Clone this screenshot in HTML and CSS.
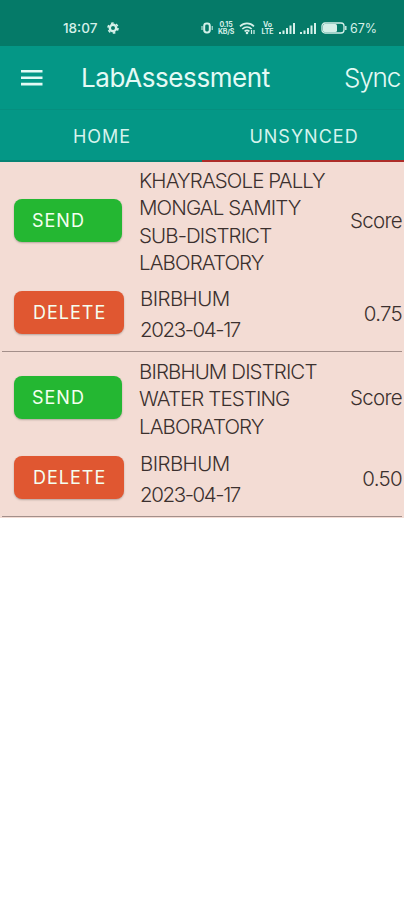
FILE: index.html
```html
<!DOCTYPE html>
<html lang="en">
  <head>
    <meta charset="UTF-8" />
    <meta name="viewport" content="width=device-width, initial-scale=1.0" />
    <title>LabAssessment</title>
    <link rel="stylesheet" href="styles.css">
  </head>
  <body>
    <div class="status-bar">
      <span class="clock">18:07</span>
      <svg class="gear" width="12" height="12" viewBox="0 0 12 12">
        <circle cx="6" cy="6" r="3.2" fill="none" stroke="currentColor" stroke-width="2.4" />
        <circle cx="6" cy="6" r="5" fill="none" stroke="currentColor" stroke-width="1.6" stroke-dasharray="2.6 2.636" />
      </svg>
      <div class="status-icons">
        <svg width="12" height="12" viewBox="0 0 12 12" fill="none" stroke="currentColor">
          <rect x="3.2" y="1.5" width="5.6" height="9" rx="2.4" stroke-width="2" />
          <path d="M1 4v4M11.2 4v4" stroke-width="1" />
        </svg>
        <div class="net-speed"><span>0.15</span><span>KB/S</span></div>
        <svg class="wifi" width="17" height="13" viewBox="0 0 17 13" fill="none" stroke="currentColor">
          <path d="M1 4.4C5 .4 11 .4 15 4.4M3.3 7c2.8-2.6 6.6-2.6 9.4 0M5.6 9.4c1.5-1.3 3.3-1.3 4.8 0" stroke-width="1.6" />
          <circle cx="8" cy="11" r="1.3" fill="currentColor" stroke="none" />
          <path d="M12.5 8v4M15 8v4" stroke-width="1.2" />
        </svg>
        <div class="volte"><span>Vo</span><span>LTE</span></div>
        <svg class="signal" width="18" height="13" viewBox="0 0 18 13" fill="currentColor">
          <path d="M1 10h2v2H1zM4.500 8.500h2V12h-2zM8 6h2v6H8zM11.500 3.500h2V12h-2zM15 1h2v11h-2z" />
        </svg>
        <svg class="signal" width="18" height="13" viewBox="0 0 18 13" fill="currentColor">
          <path d="M1 10h2v2H1zM4.500 8.500h2V12h-2zM8 6h2v6H8zM11.500 3.500h2V12h-2zM15 1h2v11h-2z" />
        </svg>
        <svg class="battery" width="26" height="12" viewBox="0 0 26 12">
          <rect x="1" y="1" width="22" height="10" rx="3" fill="none" stroke="currentColor" stroke-width="1.3" />
          <rect x="2" y="2" width="14" height="8" rx="1.5" fill="currentColor" />
          <path d="M24.800 4v4" stroke="currentColor" stroke-width="1.400" />
        </svg>
        <span class="percent">67%</span>
      </div>
    </div>

    <header class="toolbar">
      <svg class="menu" width="22" height="16" viewBox="0 0 22 16" fill="currentColor">
        <path d="M0 0h21.500v2.600H0zM0 6.400h21.500V9H0zM0 12.800h21.500v2.600H0z" />
      </svg>
      <h1>LabAssessment</h1>
      <span class="sync">Sync</span>
    </header>

    <nav class="tabs">
      <a class="tab">HOME</a>
      <a class="tab active">UNSYNCED</a>
    </nav>

    <main class="list">
      <div class="item">
        <div class="row">
          <button class="button send">SEND</button>
          <p class="name">KHAYRASOLE PALLY<br>MONGAL SAMITY<br>SUB-DISTRICT<br>LABORATORY</p>
          <span class="label">Score</span>
        </div>
        <div class="row details">
          <button class="button delete">DELETE</button>
          <p class="place">BIRBHUM<br><span class="date">2023-04-17</span></p>
          <span class="score">0.75</span>
        </div>
      </div>

      <div class="item">
        <div class="row">
          <button class="button send">SEND</button>
          <p class="name">BIRBHUM DISTRICT<br>WATER TESTING<br>LABORATORY</p>
          <span class="label">Score</span>
        </div>
        <div class="row details">
          <button class="button delete">DELETE</button>
          <p class="place">BIRBHUM<br><span class="date">2023-04-17</span></p>
          <span class="score">0.50</span>
        </div>
      </div>
    </main>
  </body>
</html>
```

FILE: styles.css
```css
:root {
  --status-color: #057a68;
  --primary-color: #049786;
  --list-color: #f3dcd4;
  --send-color: #24b732;
  --delete-color: #e05731;
  --text-color: #3b302e;
}

* {
  margin: 0;
  padding: 0;
  box-sizing: border-box;
}

body {
  font-family: Inter, Roboto, sans-serif;
  color: var(--text-color);
  background-color: white;
}

.status-bar {
  display: flex;
  align-items: center;
  height: 46px;
  padding: 10px 27px 0 63px;
  background-color: var(--status-color);
  color: #d5f0e9;
}

.clock {
  width: 44px;
  font-size: 13.5px;
  font-weight: 500;
}

.status-icons {
  display: flex;
  align-items: center;
  margin-left: auto;
}

.net-speed,
.volte {
  display: flex;
  flex-direction: column;
  font-size: 7px;
  font-weight: 700;
  line-height: 7.5px;
  text-align: center;
}

.net-speed {
  width: 18px;
  margin-left: 4px;
  letter-spacing: -0.2px;
}

.wifi {
  margin-left: 4px;
}

.volte {
  width: 15px;
  margin-left: 4px;
}

.signal {
  margin-left: 3px;
}

.battery {
  margin-left: 4px;
}

.percent {
  width: 27px;
  margin-left: 3px;
  font-size: 12.5px;
}

.toolbar {
  display: flex;
  align-items: center;
  height: 64px;
  padding: 0 4px 0 21px;
  background-color: var(--primary-color);
  color: #e4faf5;
  border-bottom: 1px solid #068f7f;
}

h1 {
  margin-left: 38px;
  font-size: 26px;
  font-weight: 400;
  letter-spacing: -0.4px;
}

.sync {
  margin-left: auto;
  font-size: 26px;
  font-weight: 300;
  letter-spacing: -1.2px;
}

.tabs {
  display: flex;
  height: 52px;
  background-color: var(--primary-color);
}

.tab {
  flex: 1;
  padding-left: 2px;
  color: #d5f3ed;
  border-bottom: 2px solid #078374;
  font-size: 18px;
  line-height: 53px;
  letter-spacing: 1px;
  text-align: center;
}

.tab.active {
  border-color: #ad2d29;
}

.list {
  padding: 0 2px 1px;
  background-color: var(--list-color);
}

.item {
  padding: 4px 0 1px 12px;
  border-bottom: 1px solid #a38f8a;
}

.row {
  display: grid;
  grid-template-columns: 125px 1fr auto;
  align-items: center;
  min-height: 84px;
}

.details {
  height: 75px;
  min-height: 0;
}

.button {
  width: 108px;
  height: 43px;
  padding-left: 18px;
  border: none;
  border-radius: 8px;
  box-shadow: 0 1px 2px rgba(0, 0, 0, 0.25);
  color: #f4fff0;
  font-family: inherit;
  font-size: 18px;
  letter-spacing: 1px;
  text-align: left;
}

.send {
  margin-bottom: 1px;
  background-color: var(--send-color);
}

.delete {
  width: 110px;
  padding-left: 19px;
  background-color: var(--delete-color);
}

.name,
.place,
.label,
.score {
  font-size: 20.5px;
  font-weight: 300;
  line-height: 27.25px;
}

.name {
  padding-top: 1px;
  margin-bottom: -1px;
  letter-spacing: -0.9px;
}

.place {
  padding: 2px 0 0 1px;
  line-height: 31px;
  letter-spacing: -0.6px;
}

.date {
  letter-spacing: -1.4px;
}

.label {
  letter-spacing: -0.7px;
}

.score {
  padding-top: 2px;
  letter-spacing: -0.7px;
}
```
